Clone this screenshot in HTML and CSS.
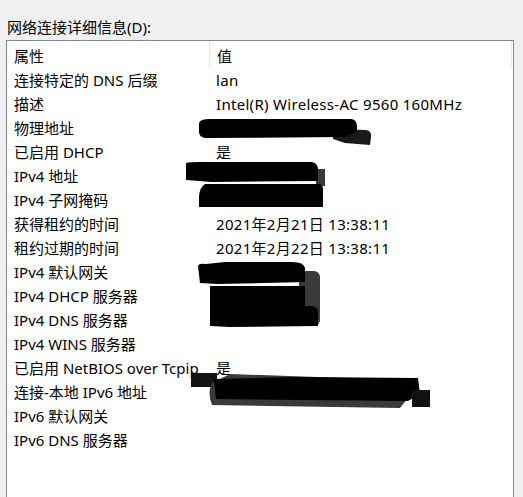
FILE: index.html
```html
<!DOCTYPE html>
<html lang="zh-CN">
<head>
<meta charset="utf-8">
<title>网络连接详细信息</title>
<link rel="stylesheet" href="styles.css">
</head>
<body>
<div class="label">网络连接详细信息(D):</div>
<div class="listbox">
  <div class="row header"><div class="c1">属性</div><div class="c2">值</div></div>
  <div class="row"><div class="c1">连接特定的 DNS 后缀</div><div class="c2">lan</div></div>
  <div class="row"><div class="c1">描述</div><div class="c2">Intel(R) Wireless-AC 9560 160MHz</div></div>
  <div class="row"><div class="c1">物理地址</div><div class="c2"></div></div>
  <div class="row"><div class="c1">已启用 DHCP</div><div class="c2">是</div></div>
  <div class="row"><div class="c1">IPv4 地址</div><div class="c2"></div></div>
  <div class="row"><div class="c1">IPv4 子网掩码</div><div class="c2"></div></div>
  <div class="row"><div class="c1">获得租约的时间</div><div class="c2">2021年2月21日 13:38:11</div></div>
  <div class="row"><div class="c1">租约过期的时间</div><div class="c2">2021年2月22日 13:38:11</div></div>
  <div class="row"><div class="c1">IPv4 默认网关</div><div class="c2"></div></div>
  <div class="row"><div class="c1">IPv4 DHCP 服务器</div><div class="c2"></div></div>
  <div class="row"><div class="c1">IPv4 DNS 服务器</div><div class="c2"></div></div>
  <div class="row"><div class="c1">IPv4 WINS 服务器</div><div class="c2"></div></div>
  <div class="row"><div class="c1">已启用 NetBIOS over Tcpip</div><div class="c2">是</div></div>
  <div class="row"><div class="c1">连接-本地 IPv6 地址</div><div class="c2"></div></div>
  <div class="row"><div class="c1">IPv6 默认网关</div><div class="c2"></div></div>
  <div class="row"><div class="c1">IPv6 DNS 服务器</div><div class="c2"></div></div>
</div>
<svg class="redact" width="523" height="497" viewBox="0 0 523 497" aria-hidden="true">
  <!-- physical address -->
  <path d="M333,129 L366,130 Q372,131 371,137 L370,145 L345,143 L333,139 Z" fill="#1a1a1a"/>
  <path d="M199,123 Q200,119 210,119 L352,119 Q357,120 357,127 L357,132 L345,137 L205,138 Q199,137 199,132 Z" fill="#000"/>
  <!-- IPv4 address / mask -->
  <rect x="316" y="169" width="9" height="17" fill="#3a3a3a"/>
  <path d="M186,163 Q190,162 200,162 L312,162 Q318,163 318,170 L318,181 L212,182 L186,180 Z" fill="#000"/>
  <path d="M205,184 L320,184 Q323,185 323,190 L323,207 L199,207 L199,196 Q200,187 205,184 Z" fill="#000"/>
  <!-- gateway / dhcp / dns -->
  <rect x="299" y="271" width="21" height="55" rx="6" fill="#3a3a3a"/>
  <path d="M198,266 Q199,263 206,264 L225,262 L292,262 Q304,262 305,268 L305,282 L218,284 L200,283 Z" fill="#000"/>
  <rect x="210" y="286" width="95" height="22" fill="#000"/>
  <path d="M210,307 L312,306 Q318,307 318,312 L318,326 L230,327 L210,326 Z" fill="#000"/>
  <!-- IPv6 link-local -->
  <rect x="191" y="373" width="26" height="14" fill="#111"/>
  <path d="M212,383 Q207,392 212,405 L400,408 L408,398 L402,380 L230,374 Z" fill="#3a3a3a"/>
  <path d="M214,379 L300,377 L418,378 L420,394 L408,401 L216,399 Z" fill="#000"/>
  <rect x="412" y="390" width="18" height="17" fill="#111"/>
</svg>
</body>
</html>
```
FILE: styles.css
```css
html, body {
  margin: 0;
  padding: 0;
}
body {
  background: #f0f0f0;
  font-family: "Noto Sans", "Noto Sans CJK SC", sans-serif;
  font-size: 15px;
  color: #000;
  width: 523px;
  height: 497px;
  overflow: hidden;
  position: relative;
}
.label {
  padding: 17px 0 0 7px;
  height: 23px;
  line-height: 20px;
}
.listbox {
  margin-left: 6px;
  width: 508px;
  height: 460px;
  box-sizing: border-box;
  background: #fff;
  border: 1px solid #828790;
  border-bottom: none;
}
.row {
  display: grid;
  grid-template-columns: 203px 1fr;
  height: 24px;
  line-height: 24px;
  white-space: nowrap;
}
.row .c1,
.row .c2 {
  box-sizing: border-box;
  height: 24px;
  padding-top: 1px;
}
.row .c1 {
  padding-left: 7px;
}
.row .c2 {
  padding-left: 6px;
  letter-spacing: 0.3px;
}
.header {
  height: 26px;
  line-height: 28px;
  margin-right: 1px;
  border-right: 1px solid #e8e8e8;
}
.header .c1 {
  border-right: 1px solid #e5e5e5;
  height: 26px;
}
.header .c2 {
  height: 26px;
  padding-left: 7px;
}
.redact {
  position: absolute;
  left: 0;
  top: 0;
  pointer-events: none;
}
```
